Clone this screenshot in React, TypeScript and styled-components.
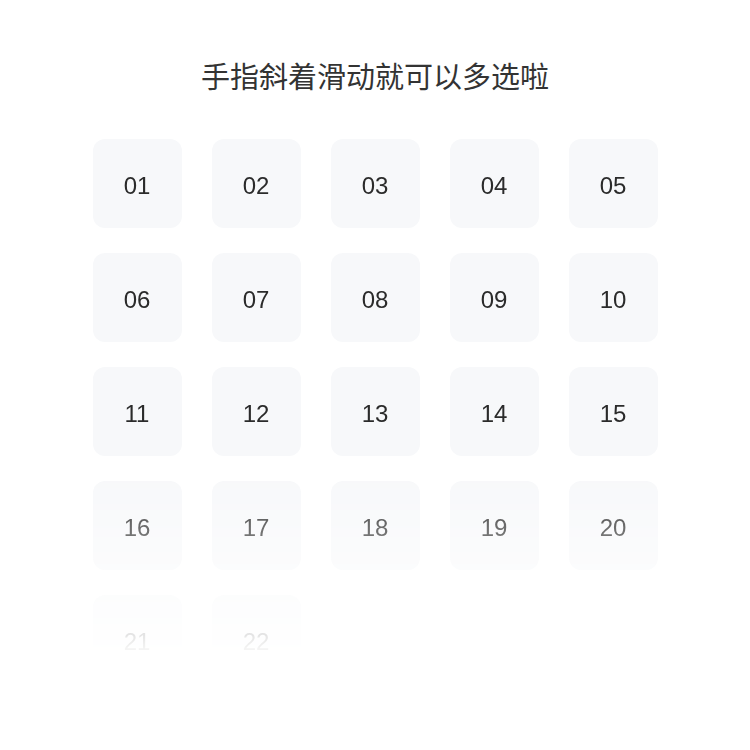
import styled, { createGlobalStyle } from 'styled-components';

const numbers = Array.from({ length: 22 }, (_, i) => String(i + 1).padStart(2, '0'));

const GlobalStyle = createGlobalStyle`
  html, body {
    margin: 0;
    padding: 0;
    background: #ffffff;
  }
`;

const Page = styled.div`
  width: 750px;
  height: 750px;
  display: flex;
  flex-direction: column;
  align-items: center;
  background: #ffffff;
`;

const Title = styled.h1`
  margin: 0;
  padding-top: 55px;
  font-family: 'Noto Sans CJK SC', 'Noto Sans', sans-serif;
  font-size: 29px;
  font-weight: 400;
  line-height: 40px;
  color: #333333;
`;

// fades the lower rows out, like a list that keeps going under the fold
const Viewport = styled.div`
  margin-top: 44px;
  height: 530px;
  overflow: hidden;
  -webkit-mask-image: linear-gradient(to bottom, #000 0, #000 330px, transparent 520px);
  mask-image: linear-gradient(to bottom, #000 0, #000 330px, transparent 520px);
`;

const Grid = styled.div`
  display: grid;
  grid-template-columns: repeat(5, 89px);
  column-gap: 30px;
  row-gap: 25px;
`;

const Tile = styled.div`
  width: 89px;
  height: 89px;
  box-sizing: border-box;
  padding-top: 4px;
  border-radius: 12px;
  background: #f7f8fa;
  display: flex;
  align-items: center;
  justify-content: center;
  font-family: 'Liberation Sans', Arial, sans-serif;
  font-size: 24px;
  color: #2b2b2b;
  user-select: none;
`;

export default function App() {
  return (
    <Page>
      <GlobalStyle />
      <Title>手指斜着滑动就可以多选啦</Title>
      <Viewport>
        <Grid>
          {numbers.map((n) => (
            <Tile key={n}>{n}</Tile>
          ))}
        </Grid>
      </Viewport>
    </Page>
  );
}
